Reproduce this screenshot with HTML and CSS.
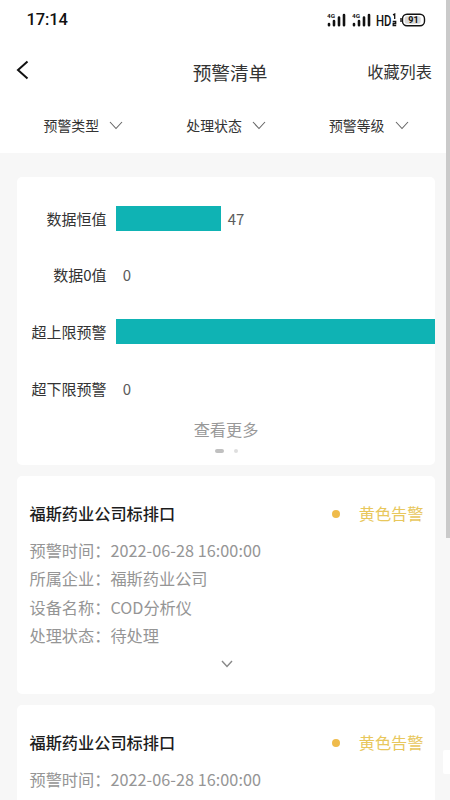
FILE: index.html
```html
<!DOCTYPE html>
<html lang="zh-CN">
<head>
<meta charset="utf-8">
<title>预警清单</title>
<link rel="stylesheet" href="styles.css">
</head>
<body>
<div class="screen">
  <header class="top">
    <div class="status">
      <span class="clock">17:14</span>
      <div class="indicators">
        <svg class="signal" width="19" height="14" viewBox="0 0 19 14"><text x="0" y="5" textLength="8" lengthAdjust="spacingAndGlyphs">4G</text><path d="M2 11v1.200M7 8v4.200M12 4.500v7.700M17 2v10.200"/></svg>
        <svg class="signal" width="19" height="14" viewBox="0 0 19 14"><text x="0" y="5" textLength="8" lengthAdjust="spacingAndGlyphs">4G</text><path d="M2 11v1.200M7 8v4.200M12 4.500v7.700M17 2v10.200"/></svg>
        <svg class="hd" width="16" height="18" viewBox="0 0 16 18"><text x="0" y="14.500" textLength="15.500" lengthAdjust="spacingAndGlyphs">HD</text></svg>
        <svg class="hd-sub" width="5" height="14" viewBox="0 0 5 14"><path d="M1 1.800 2.700 1v5M.7 8.500h3v2h-2.500v2h3"/></svg>
        <svg class="battery" width="26" height="14" viewBox="0 0 26 14"><rect class="shell" x="2.500" y="1.200" width="22" height="11.600" rx="4.500"/><rect class="level" x="4.700" y="3.200" width="16" height="7.600" rx="2"/><path d="M1 5v4"/><text x="13.500" y="10.200">91</text></svg>
      </div>
    </div>
    <nav class="nav">
      <svg class="back" width="14" height="20" viewBox="0 0 14 20"><path d="M12.500 1.500 3 10l9.500 8.500"/></svg>
      <h1>预警清单</h1>
      <span class="favorites">收藏列表</span>
    </nav>
    <div class="filters">
      <div class="filter">预警类型<svg width="14" height="9" viewBox="0 0 14 9"><path d="m1 1 6 6.500L13 1"/></svg></div>
      <div class="filter">处理状态<svg width="14" height="9" viewBox="0 0 14 9"><path d="m1 1 6 6.500L13 1"/></svg></div>
      <div class="filter">预警等级<svg width="14" height="9" viewBox="0 0 14 9"><path d="m1 1 6 6.500L13 1"/></svg></div>
    </div>
  </header>
  <main class="content">
    <section class="card chart">
      <div class="row"><span class="label">数据恒值</span><i class="bar" style="width:105px"></i><span class="value">47</span></div>
      <div class="row"><span class="label">数据0值</span><i class="bar" style="width:0"></i><span class="value">0</span></div>
      <div class="row"><span class="label">超上限预警</span><i class="bar" style="width:318.600px"></i></div>
      <div class="row"><span class="label">超下限预警</span><i class="bar" style="width:0"></i><span class="value">0</span></div>
      <div class="more">查看更多</div>
      <div class="pager"><i class="current"></i><i></i></div>
    </section>
    <section class="card alert">
      <div class="head"><h2>福斯药业公司标排口</h2><span class="dot"></span><span class="level-name">黄色告警</span></div>
      <p>预警时间：<span class="time">2022-06-28 16:00:00</span></p>
      <p>所属企业：福斯药业公司</p>
      <p>设备名称：COD分析仪</p>
      <p>处理状态：待处理</p>
      <svg class="expand" width="12" height="8" viewBox="0 0 12 8"><path d="m1 1 5 5.500L11 1"/></svg>
    </section>
    <section class="card alert">
      <div class="head"><h2>福斯药业公司标排口</h2><span class="dot"></span><span class="level-name">黄色告警</span></div>
      <p>预警时间：<span class="time">2022-06-28 16:00:00</span></p>
    </section>
  </main>
  <div class="scrollbar"></div>
  <div class="side-handle"></div>
</div>
</body>
</html>
```
FILE: styles.css
```css
* { box-sizing: border-box; }
body { margin: 0; font-family: "Noto Sans CJK SC", sans-serif; }
h1, h2, p { margin: 0; font-weight: 400; }
svg { display: block; fill: none; flex: none; }
.screen { position: relative; width: 450px; height: 800px; overflow: hidden; background: #f7f7f7; color: #333; }
.top { height: 153px; background: #fff; }

.status { display: flex; justify-content: space-between; align-items: center; height: 40px; padding: 0 24px 0 26.500px; }
.clock { font: 500 16.500px/20px Roboto, sans-serif; color: #111; letter-spacing: -.1px; }
.indicators { display: flex; align-items: center; }
.signal { margin-right: 5.500px; stroke: #111; stroke-width: 2.600; stroke-linecap: round; }
.signal text { font: 700 6px Roboto, sans-serif; fill: #111; stroke: none; }
.hd text { font: 500 15px Roboto, sans-serif; fill: #111; }
.hd-sub { margin: 0 3px 0 0; stroke: #111; stroke-width: 1.300; }
.battery { stroke: #111; stroke-width: 1.400; }
.battery .level { fill: #d8d8d8; stroke: none; }
.battery text { font: 700 9px Roboto, sans-serif; fill: #111; stroke: none; text-anchor: middle; }

.nav { display: grid; grid-template-columns: 1fr auto 1fr; align-items: center; height: 64px; padding: 0 18px 0 15px; }
.back { margin-top: -5px; stroke: #111; stroke-width: 2; }
.nav h1 { font-size: 18.700px; line-height: 28px; margin: 0 -6.500px 0 6.500px; }
.favorites { justify-self: end; font-size: 16.200px; line-height: 24px; margin-top: -2px; }
.filters { display: grid; grid-template-columns: repeat(3, 142.700px); padding-left: 12px; height: 43px; }
.filter { display: flex; align-items: center; justify-content: center; gap: 10px; margin-top: -1px; font-size: 13.900px; }
.filter svg { margin-top: 1px; stroke: #666; stroke-width: 1.100; }

.content { display: flex; flex-direction: column; gap: 11px; padding: 24px 15px 0 17px; }
.card { flex: none; background: #fff; border-radius: 5px; }
.chart { height: 288px; padding-top: 13px; }
.row { display: flex; align-items: center; height: 56.600px; }
.label { width: 89.500px; margin: 0 9.900px 0 0; text-align: right; font-size: 15px; }
.bar { flex: none; height: 25px; background: #0fb3b4; }
.value { margin: 0 0 0 6.300px; font-size: 15px; color: #5c5c5c; }
.more { margin-top: 1px; text-align: center; font-size: 16.200px; line-height: 24px; color: #999; }
.pager { display: flex; align-items: center; justify-content: center; gap: 10px; margin-top: 8px; }
.pager i { width: 4px; height: 4px; border-radius: 2px; background: #dedede; }
.pager .current { width: 9px; background: #c0c0c0; }

.alert { height: 218px; padding: 23px 11.500px 0 12.500px; font-size: 16.200px; color: #959595; }
.head { display: flex; align-items: center; height: 28px; margin-bottom: 9px; }
.head h2 { flex: 1; font-size: 16.200px; font-weight: 500; color: #1c1c1c; }
.dot { width: 8px; height: 8px; margin: 2px 18.500px 0 0; border-radius: 50%; background: #efbb4b; }
.level-name { color: #e8c75c; }
.alert p { line-height: 28.300px; }
.time { letter-spacing: .05px; }
.expand { margin: 11px auto 0; stroke: #888; stroke-width: 1.400; }

.scrollbar { position: absolute; top: 0; right: 0; width: 4px; height: 538px; background: #cacaca; }
.side-handle { position: absolute; top: 750px; right: 0; width: 7px; height: 24px; border-radius: 2px 0 0 2px; background: #fff; }
```
